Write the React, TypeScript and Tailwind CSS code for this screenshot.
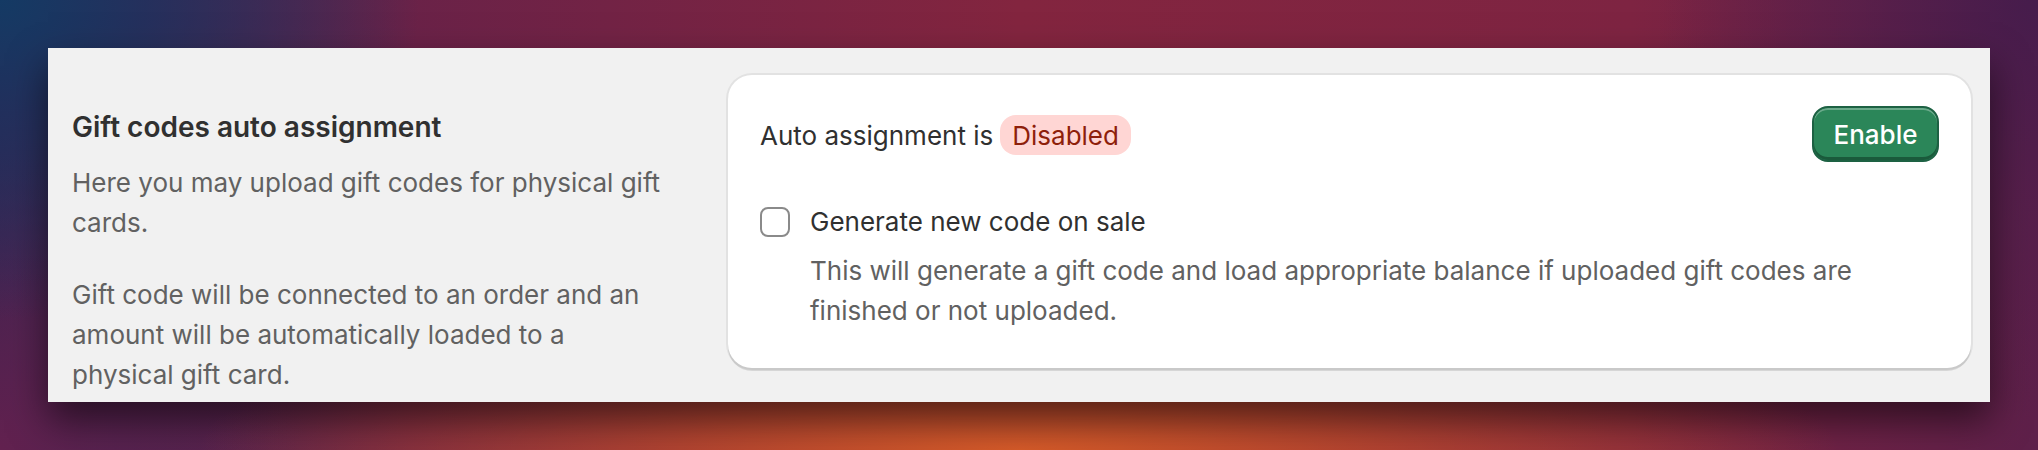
import React, { useState } from "react";

const App = () => {
  const [generate, setGenerate] = useState(false);

  return (
    <div
      className="w-[2038px] h-[450px] p-[48px] overflow-hidden bg-[#7e2443] bg-[radial-gradient(ellipse_420px_320px_at_0%_0%,#143a64_0%,rgba(30,50,95,0.85)_35%,rgba(70,30,80,0)_100%),radial-gradient(ellipse_820px_150px_at_50%_100%,#d65b29_0%,rgba(200,80,42,0.75)_40%,rgba(140,36,60,0)_100%),radial-gradient(ellipse_380px_420px_at_100%_0%,#461c4c_0%,rgba(80,30,75,0.6)_50%,rgba(126,36,67,0)_100%),radial-gradient(ellipse_300px_300px_at_0%_100%,#62214f_0%,rgba(100,34,80,0)_100%),linear-gradient(90deg,#3a2552_0%,#6a2248_20%,#83253f_50%,#7e2442_80%,#5e204a_100%)]"
      style={{ fontFamily: "Inter, 'Noto Sans', sans-serif" }}
    >
      <div className="w-[1942px] h-[354px] bg-[#f1f1f1] flex pl-[24px] pr-[19px] pt-[27px] overflow-hidden shadow-[0_18px_36px_rgba(0,0,0,0.55)]">
        {/* left description */}
        <div className="w-[592px] shrink-0 pt-[32px]">
          <h2 className="text-[28px] leading-[40px] font-semibold text-[#303030]">
            Gift codes auto assignment
          </h2>
          <p className="mt-[16px] text-[26px] leading-[40px] text-[#616161]">
            Here you may upload gift codes for physical gift cards.
          </p>
          <p className="mt-[32px] text-[26px] leading-[40px] text-[#616161]">
            Gift code will be connected to an order and an amount will be
            automatically loaded to a physical gift card.
          </p>
        </div>

        {/* card */}
        <div className="ml-[64px] flex-1 self-start h-[293px] bg-white rounded-[24px] px-[32px] pt-[31px] shadow-[0_0_0_2px_rgba(0,0,0,0.06),0_3px_0_0_rgba(0,0,0,0.11)]">
          <div className="flex items-center justify-between">
            <div className="flex items-center gap-[7px] text-[26px] text-[#303030] pt-[2px]">
              <span>Auto assignment is</span>
              <span className="h-[40px] px-[12px] flex items-center rounded-[16px] bg-[#ffd6d4] text-[#8e1f0b]">
                Disabled
              </span>
            </div>
            <button className="h-[56px] w-[127px] rounded-[16px] bg-[#2b8659] border-2 border-[#1d6143] text-white text-[26px] font-medium shadow-[inset_0_-3px_0_0_#1a5a3b,inset_0_2px_0_0_rgba(255,255,255,0.3)]">
              Enable
            </button>
          </div>

          <div className="mt-[40px] flex gap-[20px]">
            <button
              onClick={() => setGenerate(!generate)}
              className="mt-[5px] w-[30px] h-[30px] shrink-0 rounded-[8px] border-2 border-[#8a8a8a] bg-white flex items-center justify-center"
            >
              {generate && (
                <svg width="18" height="18" viewBox="0 0 20 20" fill="none">
                  <path d="M4 10l4 4 8-8" stroke="#303030" strokeWidth="2.5" />
                </svg>
              )}
            </button>
            <div>
              <div className="text-[26px] leading-[40px] text-[#303030]">
                Generate new code on sale
              </div>
              <div className="mt-[9px] text-[26px] leading-[40px] text-[#616161]">
                This will generate a gift code and load appropriate balance if
                uploaded gift codes are
                <br />
                finished or not uploaded.
              </div>
            </div>
          </div>
        </div>
      </div>
    </div>
  );
};

export default App;
